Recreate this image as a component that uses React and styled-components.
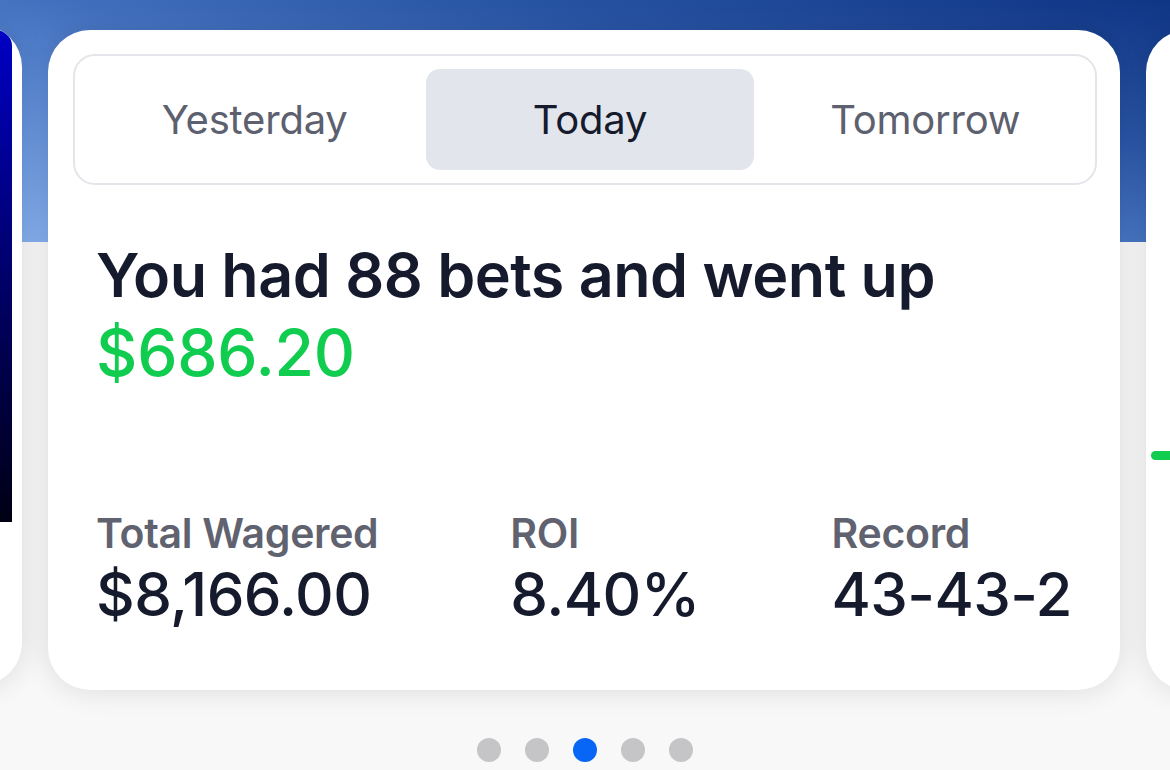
import React, { useState } from 'react';
import styled, { createGlobalStyle } from 'styled-components';

const GlobalStyle = createGlobalStyle`
  html, body {
    margin: 0;
    padding: 0;
  }
  body {
    font-family: Inter, "Noto Sans", "Liberation Sans", sans-serif;
    -webkit-font-smoothing: antialiased;
  }
`;

const Page = styled.div`
  width: 1170px;
  height: 770px;
  overflow: hidden;
  padding-top: 30px;
  box-sizing: border-box;
  background:
    linear-gradient(to top right, #86b0ee 0%, #5a88d4 35%, #2a56a6 70%, #0f3585 100%) top / 100% 242px no-repeat,
    #f8f8f8;
`;

const Track = styled.div`
  display: flex;
  gap: 26px;
  align-items: flex-start;
  transform: translateX(-1050px);
`;

const Card = styled.div`
  flex: 0 0 1072px;
  height: 660px;
  box-sizing: border-box;
  background: #ffffff;
  border-radius: 42px;
  box-shadow: 0 0 30px rgba(0, 0, 0, 0.12);
  display: flex;
  flex-direction: column;
  overflow: hidden;
  margin-top: ${(p) => p.$offset || 0}px;
`;

const Panel = styled.div`
  align-self: flex-end;
  width: 320px;
  height: 492px;
  margin: 5px 10px 0 0;
  border-radius: 16px 16px 0 0;
  background: linear-gradient(to bottom, #0000c4 0%, #00006a 50%, #000014 100%);
`;

const ChartLine = styled.div`
  width: 260px;
  height: 9px;
  margin: 421px 0 0 5px;
  border-radius: 5px;
  background: #10cc4f;
`;

const MainCard = styled(Card)`
  padding: 24px 23px 0 25px;
`;

const TabBar = styled.div`
  display: flex;
  gap: 8px;
  height: 131px;
  box-sizing: border-box;
  padding: 13px 6px 13px 16px;
  border: 2.5px solid #e3e5ea;
  border-radius: 22px;
`;

const Tab = styled.button`
  flex: 1;
  border: none;
  border-radius: 14px;
  background: ${(p) => (p.$active ? '#e2e5ec' : 'transparent')};
  color: ${(p) => (p.$active ? '#151a2c' : '#5d606e')};
  font-family: inherit;
  font-size: 40px;
  font-weight: 400;
  letter-spacing: -0.2px;
  cursor: pointer;
`;

const Summary = styled.div`
  padding: 0 23px;
  margin-top: 51px;
`;

const Headline = styled.h1`
  margin: 0;
  font-size: 61px;
  line-height: 78px;
  font-weight: 600;
  letter-spacing: -0.5px;
  color: #151a2c;
`;

const Amount = styled.div`
  font-size: 64px;
  line-height: 78px;
  font-weight: 500;
  letter-spacing: -0.2px;
  color: #10cc4f;
`;

const Stats = styled.div`
  margin-top: auto;
  padding: 0 25px 63px 23px;
  display: flex;
  justify-content: space-between;
`;

const Stat = styled.div`
  display: flex;
  flex-direction: column;
`;

const StatLabel = styled.div`
  font-size: 41px;
  line-height: 56px;
  font-weight: 600;
  letter-spacing: -0.3px;
  color: #60636f;
`;

const StatValue = styled.div`
  font-size: 60px;
  line-height: 66px;
  font-weight: 500;
  letter-spacing: -0.6px;
  color: #151a2c;
`;

const Dots = styled.div`
  display: flex;
  justify-content: center;
  gap: 24px;
  margin-top: 48px;
`;

const Dot = styled.span`
  width: 24px;
  height: 24px;
  border-radius: 50%;
  background: ${(p) => (p.$active ? '#0866f6' : '#c5c5c7')};
`;

const tabs = ['Yesterday', 'Today', 'Tomorrow'];

const stats = [
  { label: 'Total Wagered', value: '$8,166.00' },
  { label: 'ROI', value: '8.40%' },
  { label: 'Record', value: '43-43-2' },
];

export default function App() {
  const [active, setActive] = useState('Today');

  return (
    <>
      <GlobalStyle />
      <Page>
        <Track>
          <Card $offset={-5}>
            <Panel />
          </Card>
          <MainCard>
            <TabBar>
              {tabs.map((t) => (
                <Tab key={t} $active={t === active} onClick={() => setActive(t)}>
                  {t}
                </Tab>
              ))}
            </TabBar>
            <Summary>
              <Headline>You had 88 bets and went up</Headline>
              <Amount>$686.20</Amount>
            </Summary>
            <Stats>
              {stats.map((s) => (
                <Stat key={s.label}>
                  <StatLabel>{s.label}</StatLabel>
                  <StatValue>{s.value}</StatValue>
                </Stat>
              ))}
            </Stats>
          </MainCard>
          <Card>
            <ChartLine />
          </Card>
        </Track>
        <Dots>
          {[0, 1, 2, 3, 4].map((i) => (
            <Dot key={i} $active={i === 2} />
          ))}
        </Dots>
      </Page>
    </>
  );
}
